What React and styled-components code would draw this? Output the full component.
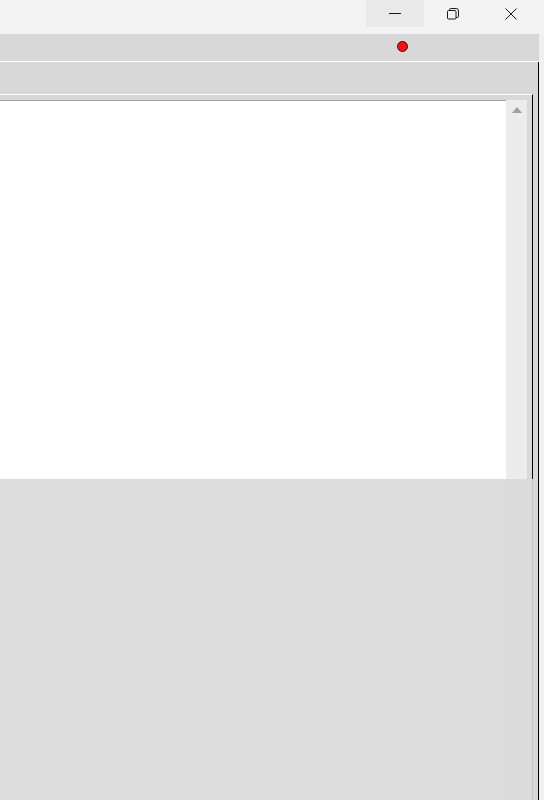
import React from 'react';
import styled, { createGlobalStyle } from 'styled-components';

const GlobalStyle = createGlobalStyle`
  html, body {
    margin: 0;
    padding: 0;
    background: #f0f0f0;
    font-family: "Segoe UI", "Noto Sans", "Liberation Sans", sans-serif;
  }
`;

const Page = styled.div`
  width: 544px;
  height: 800px;
  display: flex;
  flex-direction: column;
  overflow: hidden;
  background: #f0f0f0;
`;

const TitleBar = styled.div`
  height: 34px;
  flex: none;
  display: flex;
  justify-content: flex-end;
  align-items: flex-start;
  padding-right: 4px;
  background: #f3f3f3;
`;

const CaptionButton = styled.div`
  width: 58px;
  height: 27px;
  display: flex;
  align-items: center;
  justify-content: center;
  background: ${p => (p.$hover ? '#e9e9e9' : 'transparent')};
`;

const Window = styled.div`
  width: 539px;
  flex: 1;
  display: flex;
  flex-direction: column;
  min-height: 0;
`;

const MenuBar = styled.div`
  height: 27px;
  flex: none;
  display: flex;
  align-items: center;
  justify-content: flex-end;
  padding-right: 131px;
  background: #d8d8d8;
  border-bottom: 1px solid #ffffff;
`;

const StatusDot = styled.span`
  width: 9px;
  height: 9px;
  border-radius: 50%;
  background: #f41414;
  border: 1px solid #3a0a0a;
  margin-bottom: 2px;
`;

const Workspace = styled.div`
  width: 538px;
  flex: 1;
  display: flex;
  flex-direction: column;
  background: #d8d8d8;
  border-right: 1px solid #000000;
  min-height: 0;
`;

const Toolbar = styled.div`
  height: 32px;
  flex: none;
`;

const Panel = styled.div`
  width: 532px;
  flex: none;
  display: flex;
  padding-top: 5px;
  border-top: 1px solid #ffffff;
  border-right: 1px solid #000000;
  background: #d8d8d8;
`;

const Editor = styled.div`
  width: 506px;
  height: 378px;
  background: #ffffff;
  border-top: 1px solid #a0a0a0;
`;

const ScrollBar = styled.div`
  width: 21px;
  height: 379px;
  background: #ececec;
  display: flex;
  justify-content: center;
  padding-top: 7px;
  box-sizing: border-box;
`;

const Bottom = styled.div`
  width: 532px;
  flex: 1;
  display: flex;
  border-right: 1px solid #c8c8c8;
`;

const BottomMain = styled.div`
  width: 506px;
  background: #dcdcdc;
`;

const BottomSide = styled.div`
  flex: 1;
  background: #dbdbdb;
`;

const MinimizeIcon = () => (
  <svg width="12" height="12" viewBox="0 0 12 12">
    <line x1="0" y1="5.5" x2="12" y2="5.5" stroke="#1a1a1a" strokeWidth="1" />
  </svg>
);

const RestoreIcon = () => (
  <svg width="12" height="12" viewBox="0 0 12 12" fill="none" stroke="#1a1a1a" strokeWidth="1">
    <rect x="0.5" y="2.5" width="8.5" height="8.5" rx="1" />
    <path d="M2.5 2.5 V1.8 a1.3 1.3 0 0 1 1.3-1.3 H9.2 a2.3 2.3 0 0 1 2.3 2.3 V8.2 a1.3 1.3 0 0 1 -1.3 1.3 H9" />
  </svg>
);

const CloseIcon = () => (
  <svg width="12" height="12" viewBox="0 0 12 12">
    <path d="M0.5 0.5 L11.5 11.5 M11.5 0.5 L0.5 11.5" stroke="#1a1a1a" strokeWidth="1" />
  </svg>
);

const ArrowUp = () => (
  <svg width="10" height="6" viewBox="0 0 10 6">
    <polygon points="5,0 10,6 0,6" fill="#a0a0a0" />
  </svg>
);

const App = () => {
  return (
    <Page>
      <GlobalStyle />
      <TitleBar>
        <CaptionButton $hover>
          <MinimizeIcon />
        </CaptionButton>
        <CaptionButton>
          <RestoreIcon />
        </CaptionButton>
        <CaptionButton>
          <CloseIcon />
        </CaptionButton>
      </TitleBar>

      <Window>
        <MenuBar>
          <StatusDot />
        </MenuBar>
        <Workspace>
          <Toolbar />
          <Panel>
            <Editor />
            <ScrollBar>
              <ArrowUp />
            </ScrollBar>
          </Panel>
          <Bottom>
            <BottomMain />
            <BottomSide />
          </Bottom>
        </Workspace>
      </Window>
    </Page>
  );
};

export default App;
